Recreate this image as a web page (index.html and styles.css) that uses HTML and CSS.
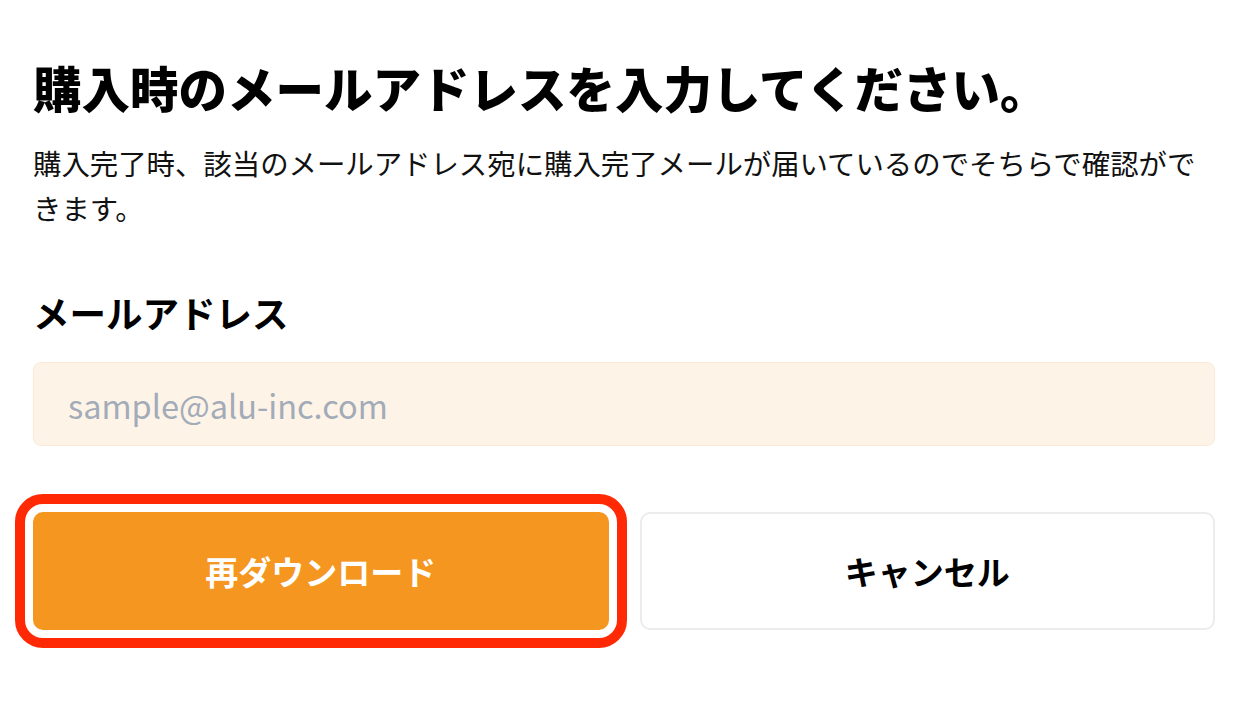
FILE: index.html
```html
<!DOCTYPE html>
<html lang="ja">
<head>
    <meta charset="UTF-8">
    <meta name="viewport" content="width=device-width, initial-scale=1.0">
    <title>再ダウンロード</title>
    <link rel="stylesheet" href="styles.css">
</head>
<body>
    <div class="container">
        <h1 class="title">購入時のメールアドレスを入力してください。</h1>
        <p class="lead">購入完了時、該当のメールアドレス宛に購入完了メールが届いているのでそちらで確認ができます。</p>
        <label class="label" for="email">メールアドレス</label>
        <input class="email" type="email" id="email" placeholder="sample@alu-inc.com">
        <div class="actions">
            <button class="btn btn-primary">再ダウンロード</button>
            <button class="btn btn-cancel">キャンセル</button>
        </div>
    </div>
</body>
</html>
```

FILE: styles.css
```css
body {
    margin: 0;
    background: #ffffff;
    font-family: "Noto Sans CJK JP", "Noto Sans", sans-serif;
    color: #000;
}
.container {
    padding: 0 33px 60px;
}
.title {
    margin: 54px 0 0;
    font-size: 48.5px;
    line-height: 66px;
    font-weight: 900;
    white-space: nowrap;
}
.lead {
    margin: 20px 0 0;
    font-size: 28.4px;
    line-height: 45px;
    color: #111;
}
.label {
    display: block;
    margin-top: 58px;
    font-size: 36.5px;
    line-height: 50px;
    font-weight: 700;
}
.email {
    display: block;
    box-sizing: border-box;
    width: 100%;
    height: 84px;
    margin-top: 24px;
    padding: 0 34px;
    background: #fef3e7;
    border: 1px solid #fbe9d6;
    border-radius: 8px;
    font-family: inherit;
    font-size: 32.5px;
    outline: none;
}
.email::placeholder {
    color: #a2abb8;
}
.actions {
    display: grid;
    grid-template-columns: 1fr 1fr;
    gap: 31px;
    margin-top: 66px;
}
.btn {
    height: 118px;
    border-radius: 10px;
    font-family: inherit;
    font-size: 33px;
    font-weight: 700;
    cursor: pointer;
}
.btn-primary {
    background: #f59621;
    color: #fff;
    border: none;
    outline: 10px solid #ff2a05;
    outline-offset: 8px;
}
.btn-cancel {
    background: #fff;
    color: #000;
    border: 2px solid #ececec;
}
```
